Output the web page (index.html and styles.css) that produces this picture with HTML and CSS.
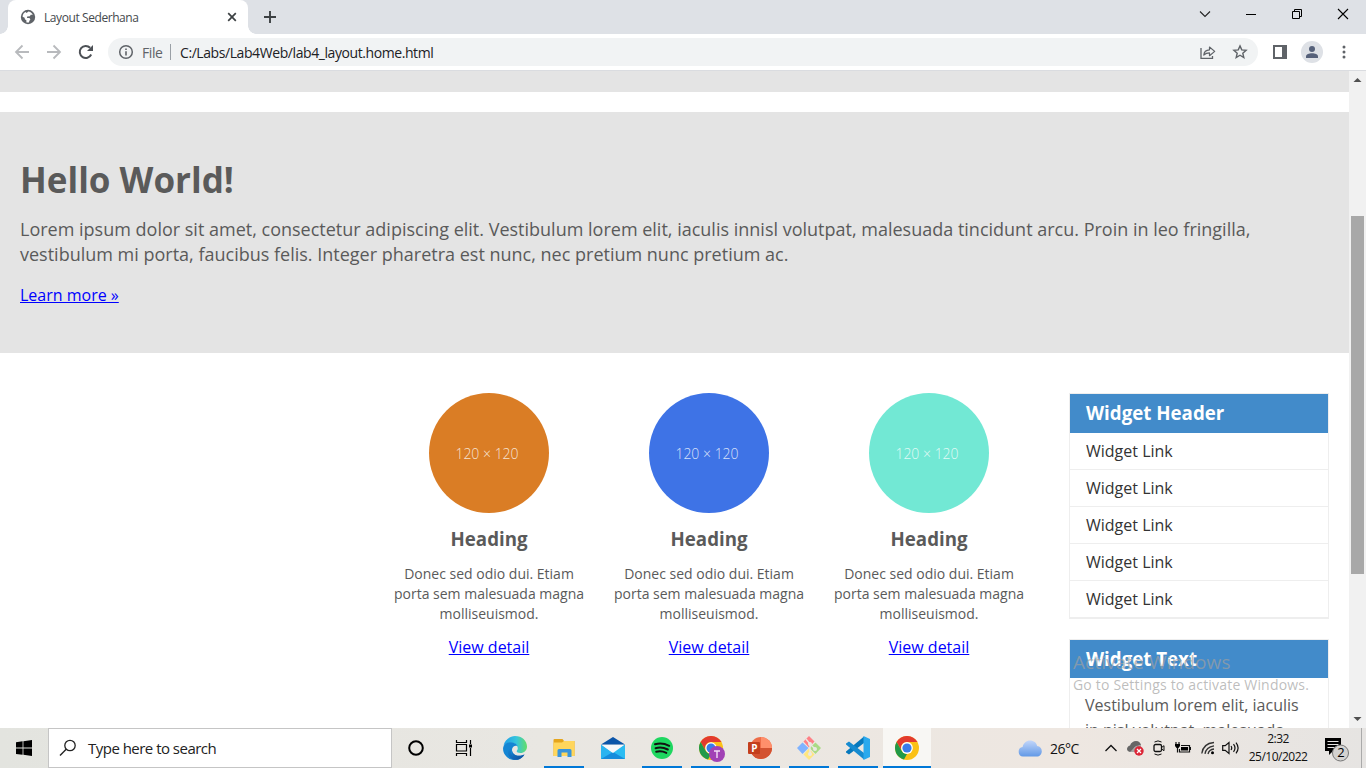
FILE: index.html
```html
<!DOCTYPE html>
<html lang="en">
<head>
<meta charset="utf-8">
<title>Layout Sederhana</title>
<link rel="stylesheet" href="styles.css">
</head>
<body>
<div class="screen">
  <header class="tabstrip">
    <div class="tab">
      <svg class="tab-globe" width="16" height="16" viewBox="0 0 16 16"><circle cx="8" cy="8" r="7.2" fill="#5f6368"/><path d="M8.300 2.600c1.900.3 3.600 1.300 4.500 3.100l-2.100.1-.8 1.400-2.700.2-.2 1.500 2.500.2.900 1.500-1 1.100-.5 1.700c-1.100.3-2 .1-2.600-.1l.2-1.900-1.600-1.200-.3-1.500-2-.9c0-2.300 1.300-4 2.900-4.800l1.200 1z" fill="#fff"/></svg>
      <span class="tab-title">Layout Sederhana</span>
      <svg class="tab-close" width="10" height="10" viewBox="0 0 10 10"><path d="M1.200 1.200l7.600 7.600M8.800 1.200L1.200 8.800" stroke="#3c4043" stroke-width="1.700"/></svg>
    </div>
    <svg class="new-tab" width="14" height="14" viewBox="0 0 14 14"><path d="M7 1v12M1 7h12" stroke="#3c4043" stroke-width="1.900"/></svg>
    <div class="window-buttons">
      <svg width="46" height="28" viewBox="0 0 46 28"><path d="M18 11.500l5 5 5-5" fill="none" stroke="#222" stroke-width="1.100"/></svg>
      <svg width="46" height="28" viewBox="0 0 46 28"><path d="M18 14.500h10" stroke="#000"/></svg>
      <svg width="46" height="28" viewBox="0 0 46 28"><path d="M18.500 11.500h7v7h-7zM20.500 11.500v-2h7v7h-2" fill="none" stroke="#000"/></svg>
      <svg width="46" height="28" viewBox="0 0 46 28"><path d="M18 9l10 10M28 9L18 19" stroke="#000" stroke-width="1.100"/></svg>
    </div>
  </header>
  <nav class="toolbar">
    <svg class="nav-icon" width="32" height="36" viewBox="0 0 32 36"><path d="M29 18H16M22.500 11.500L16 18l6.500 6.500" fill="none" stroke="#b8babd" stroke-width="1.800"/></svg>
    <svg class="nav-icon" width="32" height="36" viewBox="0 0 32 36"><path d="M15 18h13M21.500 11.500L28 18l-6.500 6.500" fill="none" stroke="#b8babd" stroke-width="1.800"/></svg>
    <svg class="nav-icon" width="32" height="36" viewBox="0 0 32 36"><path d="M27.200 20.500a6 6 0 1 1-1.100-6.700" fill="none" stroke="#4d5156" stroke-width="2"/><path d="M29 11v6h-6z" fill="#4d5156"/></svg>
    <div class="omnibox">
      <svg class="info" width="16" height="16" viewBox="0 0 16 16"><circle cx="8" cy="8" r="6.300" fill="none" stroke="#5f6368" stroke-width="1.500"/><path d="M8 7.200v4.200M8 4.500v1.600" stroke="#5f6368" stroke-width="1.600"/></svg>
      <span class="scheme">File</span><span class="url-sep"></span><span class="url">C:/Labs/Lab4Web/lab4_layout.home.html</span>
      <svg class="share" width="16" height="16" viewBox="0 0 16 16"><path d="M1 4v10.400h11.500V12" fill="none" stroke="#5f6368" stroke-width="1.300"/><path d="M3.800 11c.3-3.500 2.300-5 5.700-5.200V3l5.200 4.400-5.200 4.300V8.900C7 8.900 5.300 9.600 3.800 11z" fill="none" stroke="#5f6368" stroke-width="1.200" stroke-linejoin="round"/></svg>
      <svg class="star" width="16" height="16" viewBox="0 0 16 16"><path d="M8 1.900l1.750 4 4.350.4-3.300 2.900 1 4.300L8 11.200l-3.800 2.300 1-4.300-3.300-2.900 4.350-.4z" fill="none" stroke="#5f6368" stroke-width="1.400"/></svg>
    </div>
    <svg class="panel" width="14" height="14" viewBox="0 0 14 14"><path d="M0 0h14v14H0z" fill="#5f6368"/><path d="M2 2h7v10H2z" fill="#fff"/></svg>
    <svg class="profile" width="22" height="22" viewBox="0 0 22 22"><circle cx="11" cy="11" r="11" fill="#dee1e6"/><circle cx="11" cy="8" r="3" fill="#56617a"/><path d="M5 17v-1.500C5 13.500 8 12.300 11 12.300s6 1.200 6 3.200V17z" fill="#56617a"/></svg>
    <svg class="menu" width="4" height="14" viewBox="0 0 4 14"><g fill="#5f6368"><circle cx="2" cy="2" r="1.500"/><circle cx="2" cy="7" r="1.500"/><circle cx="2" cy="12" r="1.500"/></g></svg>
  </nav>

  <div class="viewport">
    <div class="page">
      <div class="strip"></div>
      <section class="hero">
        <h1>Hello World!</h1>
        <p>Lorem ipsum dolor sit amet, consectetur adipiscing elit. Vestibulum lorem elit, iaculis innisl volutpat, malesuada tincidunt arcu. Proin in leo fringilla,<br>vestibulum mi porta, faucibus felis. Integer pharetra est nunc, nec pretium nunc pretium ac.</p>
        <a class="learn" href="#">Learn more »</a>
      </section>
      <div class="content">
        <main class="boxes">
          <article class="box"><div class="circle orange">120 × 120</div><h3>Heading</h3><p>Donec sed odio dui. Etiam<br>porta sem malesuada magna<br>molliseuismod.</p><a href="#">View detail</a></article>
          <article class="box"><div class="circle blue">120 × 120</div><h3>Heading</h3><p>Donec sed odio dui. Etiam<br>porta sem malesuada magna<br>molliseuismod.</p><a href="#">View detail</a></article>
          <article class="box"><div class="circle mint">120 × 120</div><h3>Heading</h3><p>Donec sed odio dui. Etiam<br>porta sem malesuada magna<br>molliseuismod.</p><a href="#">View detail</a></article>
        </main>
        <aside class="sidebar">
          <section class="widget">
            <h3>Widget Header</h3>
            <ul><li>Widget Link</li><li>Widget Link</li><li>Widget Link</li><li>Widget Link</li><li>Widget Link</li></ul>
          </section>
          <section class="widget">
            <h3 class="short">Widget Text</h3>
            <p>Vestibulum lorem elit, iaculis<br>in nisl volutpat, malesuada</p>
          </section>
        </aside>
      </div>
    </div>
    <div class="scrollbar">
      <svg width="17" height="17" viewBox="0 0 17 17"><path d="M4.500 11L8.500 7l4 4z" fill="#505050"/></svg>
      <div class="thumb"></div>
      <svg width="17" height="17" viewBox="0 0 17 17"><path d="M4.500 6L8.500 10l4-4z" fill="#505050"/></svg>
    </div>
    <div class="watermark"><div class="wm-title">Activate Windows</div><div class="wm-text">Go to Settings to activate Windows.</div></div>
  </div>

  <footer class="taskbar">
    <div class="start"><svg width="16" height="16" viewBox="0 0 16 16"><path d="M0 2.200L6.600 1.300V7.600H0zM7.400 1.200L16 0v7.600H7.400zM0 8.400h6.600v6.400L0 13.900zM7.400 8.400H16V16l-8.600-1.200z"/></svg></div>
    <div class="search"><svg width="18" height="18" viewBox="0 0 18 18"><circle cx="11" cy="6.500" r="5.200" fill="none" stroke="#222" stroke-width="1.300"/><path d="M7.200 10.300L1 16.500" stroke="#222" stroke-width="1.400"/></svg><span>Type here to search</span></div>
    <div class="apps">
      <div class="sys"><svg width="16" height="16" viewBox="0 0 16 16"><circle cx="8" cy="8" r="6.800" fill="none" stroke="#000" stroke-width="2"/></svg></div>
      <div class="sys"><svg width="18" height="16" viewBox="0 0 18 16"><path d="M1.500 0v2.500h10V0M1.500 16v-2.500h10V16M1.500 4.500h10v6.500h-10zM15.500 0v4M15.500 8v8" fill="none" stroke="#000" stroke-width="1.200"/><path d="M14 4.500h3v3h-3z"/></svg></div>
      <div class="app"><svg width="24" height="24" viewBox="0 0 24 24"><defs><linearGradient id="eg" x1="0" x2="1"><stop offset="0" stop-color="#1e9de8"/><stop offset=".55" stop-color="#36c5dc"/><stop offset="1" stop-color="#63de68"/></linearGradient><linearGradient id="eb" x1="0" x2="1" y2="1"><stop offset="0" stop-color="#168bd9"/><stop offset="1" stop-color="#0f4c9b"/></linearGradient></defs><path d="M.5 9.500C2 3.500 7 0 12 0c7 0 12 4.800 12 10.500 0 4-3 6.500-6.500 6.500-3 0-4.500-1.300-3.500-2.500 1.700-2 .5-5.500-2.500-7C8 5.800 3.500 7 .5 9.500z" fill="url(#eg)"/><path d="M.1 12C.5 8.500 4 6 8 6.200c3.300.1 5.800 2 6.700 4-2.500-1.200-5.500.4-5.700 3.600-.2 5 5.800 7.800 12.500 4.700C19.500 22 16 24 12 24 5 24-.4 18.500.1 12z" fill="#1485d3"/><path d="M9.500 10.700C6 14 8 21 14.500 23.700 9 24.500 5 21 5 16.500c0-3 2-5 4.500-5.800zM9.200 14.500c.2 4.500 6 7 12.300 4-1.500 3-4.500 4.800-7 5.200-4-1-6-4.500-5.300-9.200z" fill="url(#eb)"/></svg></div>
      <div class="app running"><svg width="22" height="20" viewBox="0 0 22 20"><path d="M.5 3V2q0-1 1-1H9q1 0 1.300 1l.7 1H21.500v15H.5z" fill="#e5a51c"/><path d="M.5 4.500H9L11 3h10.500v15H.5z" fill="#ffd65c"/><path d="M4.500 19v-6.500q0-1.500 1.500-1.500h11q1.500 0 1.500 1.500V19h-4v-4.500h-6V19z" fill="#3995dc"/></svg></div>
      <div class="app"><svg width="24" height="22" viewBox="0 0 24 22"><path d="M0 7.500L12 0l12 7.500z" fill="#0b55a9"/><path d="M0 7.500v14.500h24V7.500L12 16z" fill="#2bb4f0"/><path d="M24 7.500v14.500L11 15.500z" fill="#2bbcf2"/><path d="M0 22l12-7 12 7z" fill="#168cdc"/><path d="M1 8h22l-11 8z" fill="#f7f8fa"/></svg></div>
      <div class="app running"><svg width="22" height="22" viewBox="0 0 22 22"><circle cx="11" cy="11" r="11" fill="#1ed760"/><path d="M4 7.300q7-2.200 14.200 1.500M4.600 11.200q6-1.800 12.200 1.300M5.200 14.800q5.300-1.300 10.100 1.100" fill="none" stroke="#111" stroke-width="2" stroke-linecap="round"/></svg></div>
      <div class="app running"><svg class="chrome-t" width="26" height="26" viewBox="0 0 26 26"><circle cx="12" cy="12" r="12" fill="#fbc116"/><path d="M1.600 6A12 12 0 0 1 22.400 6H12a6 6 0 0 0-5.200 9z" fill="#e33b2e"/><path d="M1.600 6l5.200 9A6 6 0 0 0 12 18l-3 5.600A12 12 0 0 1 1.600 6z" fill="#229a49"/><circle cx="12" cy="12" r="5.700" fill="#fff"/><circle cx="12" cy="12" r="4.500" fill="#397ce9"/><circle cx="18" cy="18" r="8" fill="#a142b5"/><path d="M15 15h6M18 15v7" stroke="#f3dff6" stroke-width="1.400"/></svg></div>
      <div class="app running"><svg width="24" height="22" viewBox="0 0 24 22"><circle cx="13" cy="11" r="11" fill="#ed6c47"/><path d="M13 0a11 11 0 0 1 11 11H13z" fill="#ff8f6b"/><path d="M2 11h22a11 11 0 0 1-22 0z" fill="#d35230"/><rect y="5" width="12" height="12" rx="1" fill="#c43e1c"/><text x="3.200" y="14.500" class="ppt-letter">P</text></svg></div>
      <div class="app running"><svg width="24" height="24" viewBox="0 0 24 24"><path d="M12 0l5.500 5.500-5.500 6-5.500-6z" fill="#ff8086"/><path d="M5.500 6.500l6 5.500-6 6L0 12z" fill="#80b3ff"/><path d="M18.500 6.500L24 12l-5.500 6-6-6z" fill="#aadb85"/><path d="M12 12.500l5.500 6L12 24l-5.500-5.500z" fill="#ffe680"/><path d="M9 3l4 5v10M13 8l5 5" fill="none" stroke="#ebe8e4" stroke-width="1.400"/><g fill="#ebe8e4"><circle cx="13" cy="8" r="2"/><circle cx="18" cy="13" r="2"/><circle cx="13" cy="18" r="2"/></g></svg></div>
      <div class="app running"><svg width="24" height="24" viewBox="0 0 24 24"><path d="M18 .5V7L3 18.500 0 16.500v-1z" fill="#0779bd"/><path d="M0 8.500v-1l3-2L18 17v6.500z" fill="#168bd0"/><path d="M17.500 0L24 3v18l-6.500 3z" fill="#2aa9ed"/></svg></div>
      <div class="app running active"><svg width="24" height="24" viewBox="0 0 24 24"><circle cx="12" cy="12" r="12" fill="#fbc116"/><path d="M1.600 6A12 12 0 0 1 22.400 6H12a6 6 0 0 0-5.200 9z" fill="#e33b2e"/><path d="M1.600 6l5.200 9A6 6 0 0 0 12 18l-3 5.600A12 12 0 0 1 1.600 6z" fill="#229a49"/><circle cx="12" cy="12" r="5.900" fill="#fff"/><circle cx="12" cy="12" r="4.600" fill="#397ce9"/></svg></div>
    </div>
    <div class="tray">
      <svg class="cloud" width="24" height="17" viewBox="0 0 24 17"><defs><linearGradient id="cl" y2="1" x2="0"><stop stop-color="#c2d6fa"/><stop offset="1" stop-color="#6299e6"/></linearGradient></defs><path d="M5 16.500a4.800 4.800 0 0 1-.4-9.500C5.500 3 8.500.5 12 .5c3.800 0 6.500 2.200 7.200 5.600 2.900.3 4.600 2.500 4.600 5.100 0 3-2.200 5.300-5 5.300z" fill="url(#cl)"/></svg>
      <span class="temp">26°C</span>
      <svg class="chev" width="12" height="8" viewBox="0 0 12 8"><path d="M.5 7L6 1.500 11.500 7" fill="none" stroke="#111" stroke-width="1.300"/></svg>
      <svg class="drive" width="18" height="16" viewBox="0 0 18 16"><path d="M4 12C1 12 0 10.500 0 9s1-3 3-3.500C4 2.500 6.500 1 9 1c3 0 4.500 2 5 4L8 7z" fill="#666"/><path d="M3 12l6-6 5-1v7z" fill="#a5a5a5"/><circle cx="12" cy="11" r="4.700" fill="#dc2637"/><path d="M10 9l4 4M14 9l-4 4" stroke="#fff" stroke-width="1.200"/></svg>
      <svg class="cam" width="12" height="16" viewBox="0 0 12 16"><rect x="1" y="4.500" width="7.500" height="7" rx="1.500" fill="none" stroke="#111" stroke-width="1.300"/><path d="M8.500 7.500l2.500-1.800v5l-2.500-1.800M1.500 2q3.500-2.200 7 0M1.500 14q3.500 2.200 7 0" fill="none" stroke="#111"/></svg>
      <svg class="battery" width="16" height="13" viewBox="0 0 16 13"><path d="M6 3.500h8.500v6.500h-10V7M15.500 5v3M2.500 6v4.500M1 0v3M4 0v3" fill="none" stroke="#111" stroke-width="1.200"/><path d="M0 2h5v2L3.500 6h-2L0 4zM6 5h7v3.500H6z"/></svg>
      <svg class="wifi" width="14" height="14" viewBox="0 0 14 14"><path d="M.8 12.500Q2 2.500 13 1.500M4 12.800Q5 6 13 4.800M7 13Q8 8.500 13 8" fill="none" stroke="#333" stroke-width="1.300"/><circle cx="11.500" cy="11.700" r="1.500"/></svg>
      <svg class="vol" width="17" height="14" viewBox="0 0 17 14"><path d="M.7 4.700h2.500L7 1.500v11L3.200 9.300H.7zM9 5q1.500 2 0 4M11.500 3.200q3 3.800 0 7.600M14 1.700q4.200 5.300 0 10.600" fill="none" stroke="#111" stroke-width="1.200"/></svg>
      <div class="clock"><span class="time">2:32</span><span class="date">25/10/2022</span></div>
      <svg class="note" width="26" height="26" viewBox="0 0 26 26"><path d="M0 1h16v13H8l-4 4v-4H0z"/><path d="M2.500 4.500h11M2.500 7.500h11M2.500 10.500h7" stroke="#e7e4e1" stroke-width="1.200"/><circle cx="15.500" cy="16" r="8" fill="#d4d2d0" stroke="#777"/><text x="12.200" y="20.300" class="count">2</text></svg>
      <div class="show-desktop"></div>
    </div>
  </footer>
</div>
</body>
</html>
```
FILE: styles.css
```css
* { box-sizing: border-box; }
body { margin: 0; font-family: "Open Sans", sans-serif; }
h1, h3, p, ul { margin: 0; padding: 0; }
svg { display: block; flex: none; }
.screen { width: 1366px; height: 768px; display: flex; flex-direction: column; overflow: hidden; background: #fff; }

.tabstrip { height: 34px; flex: none; display: flex; background: #dee1e6; padding-left: 8px; }
.tab { width: 240px; height: 34px; background: #fff; border-radius: 8px 8px 0 0; display: flex; align-items: center; padding: 0 11px 0 12px; position: relative; }
.tab::before, .tab::after { content: ""; position: absolute; bottom: 0; width: 8px; height: 8px; }
.tab::before { left: -8px; background: radial-gradient(circle at 0 0, #dee1e6 7.5px, #fff 8px); }
.tab::after { right: -8px; background: radial-gradient(circle at 100% 0, #dee1e6 7.5px, #fff 8px); }
.tab-title { margin-left: 8px; font-size: 12px; color: #45494d; flex: 1; white-space: nowrap; letter-spacing: -.42px; }
.new-tab { margin: 10px 0 0 15px; }
.window-buttons { display: flex; margin-left: auto; }

.toolbar { height: 37px; flex: none; display: flex; align-items: center; border-bottom: 1px solid #dadce0; background: #fff; }
.nav-icon:nth-child(3) { margin-right: 12px; }
.omnibox { width: 1150px; height: 28px; border-radius: 14px; background: #f1f3f4; display: flex; align-items: center; padding: 0 10px; font-size: 14px; white-space: nowrap; }
.scheme { margin-left: 8px; color: #5f6368; width: 22px; letter-spacing: -.4px; }
.url-sep { width: 1px; height: 16px; background: #9aa0a6; margin: 0 9px 0 6px; }
.url { color: #202124; letter-spacing: -.42px; flex: 1; }
.share { margin-right: 16px; }
.panel { margin-left: 15px; }
.profile { margin-left: 14px; }
.menu { margin-left: 19px; }

.viewport { flex: 1; min-height: 0; display: flex; position: relative; overflow: hidden; }
.page { width: 1349px; color: #5a5a5a; }
.strip { height: 21px; background: #e4e4e4; }
.hero { margin-top: 20px; height: 241px; background: #e4e4e4; padding: 48px 20px 0; white-space: nowrap; }
.hero h1 { font-size: 35px; line-height: 40px; font-weight: 700; }
.hero p { font-size: 18px; line-height: 25px; margin: 17px 0 16px; }
.page a { color: #00f; font-size: 16px; line-height: 24px; text-decoration: underline; display: inline-block; }
.content { display: flex; padding: 40px 20px 0 379px; }
.boxes { display: flex; }
.box { width: 220px; text-align: center; white-space: nowrap; }
.circle { width: 120px; height: 120px; border-radius: 50%; margin: 0 auto; color: #fffc; font-size: 14px; font-weight: 300; line-height: 121px; padding-right: 4px; }
.orange { background: #da7d25; }
.blue { background: #3e73e6; }
.mint { background: #72e8d4; }
.box h3 { font-size: 18.72px; line-height: 26px; font-weight: 700; margin: 13px 0 12px; }
.box p { font-size: 14px; line-height: 20px; margin-bottom: 11px; }
.sidebar { margin-left: 30px; width: 260px; white-space: nowrap; }
.widget { border: 1px solid #eee; margin-bottom: 20px; }
.widget h3 { height: 39px; line-height: 38px; padding-left: 16px; background: #428bca; color: #fff; font-size: 18.72px; font-weight: 700; }
.widget h3.short { height: 38px; }
.widget ul { list-style: none; }
.widget li { height: 37px; line-height: 36px; border-bottom: 1px solid #eee; padding-left: 16px; font-size: 16px; color: #333; }
.widget p { font-size: 16px; line-height: 25px; padding: 15px 15px; }
.scrollbar { width: 17px; background: #f1f1f1; display: flex; flex-direction: column; }
.thumb { width: 13px; height: 358px; margin: 128px 0 auto 2px; background: #a8a8a8; }
.watermark { position: absolute; left: 1073px; top: 579px; color: #a0a0a0b0; white-space: nowrap; }
.wm-title { font-size: 19px; line-height: 24px; letter-spacing: .1px; }
.wm-text { font-size: 14px; line-height: 20px; letter-spacing: .19px; padding-top: 1px; }

.taskbar { height: 40px; flex: none; display: flex; background: linear-gradient(90deg, #e3e4df, #e9e7e2 40%, #eee7e1 78%, #e6e4e2); }
.start { width: 48px; display: flex; align-items: center; justify-content: center; }
.search { width: 344px; border: 1px solid #c5c5c5; background: #fff; display: flex; align-items: center; padding-left: 10px; font-size: 15px; color: #222; white-space: nowrap; }
.search span { margin-left: 11px; letter-spacing: -.52px; }
.apps { display: flex; }
.sys { width: 48px; display: flex; align-items: center; justify-content: center; }
.sys + .app { margin-left: 2px; }
.app { width: 49px; height: 40px; display: flex; align-items: center; justify-content: center; position: relative; }
.running::after { content: ""; position: absolute; left: 5px; bottom: 0; width: 40px; height: 2px; background: #0078d7; }
.chrome-t { margin-left: 2px; margin-top: 2px; }
.active { width: 48px; margin-left: 1px; background: #f8f7f4; }
.active::after { left: 0; width: 48px; }
.ppt-letter { font: 700 10px "Open Sans", sans-serif; fill: #fff; }
.tray { margin-left: auto; display: flex; align-items: center; white-space: nowrap; color: #111; }
.cloud { margin-right: 8px; }
.temp { width: 31px; font-size: 14px; letter-spacing: -.5px; margin-right: 24px; }
.chev { margin-right: 10px; }
.drive { margin-right: 8px; }
.cam { margin-right: 10px; }
.battery { margin-right: 10px; }
.wifi { margin-right: 7px; }
.vol { margin-right: 10px; }
.clock { width: 58px; display: flex; flex-direction: column; align-items: center; font-size: 12px; line-height: 18px; letter-spacing: -.5px; margin-right: 18px; padding-bottom: 1px; }
.note { margin-right: 10px; margin-top: 4px; }
.count { font: 13px "Open Sans", sans-serif; }
.show-desktop { width: 5px; height: 40px; border-left: 1px solid #aaa; }
```
